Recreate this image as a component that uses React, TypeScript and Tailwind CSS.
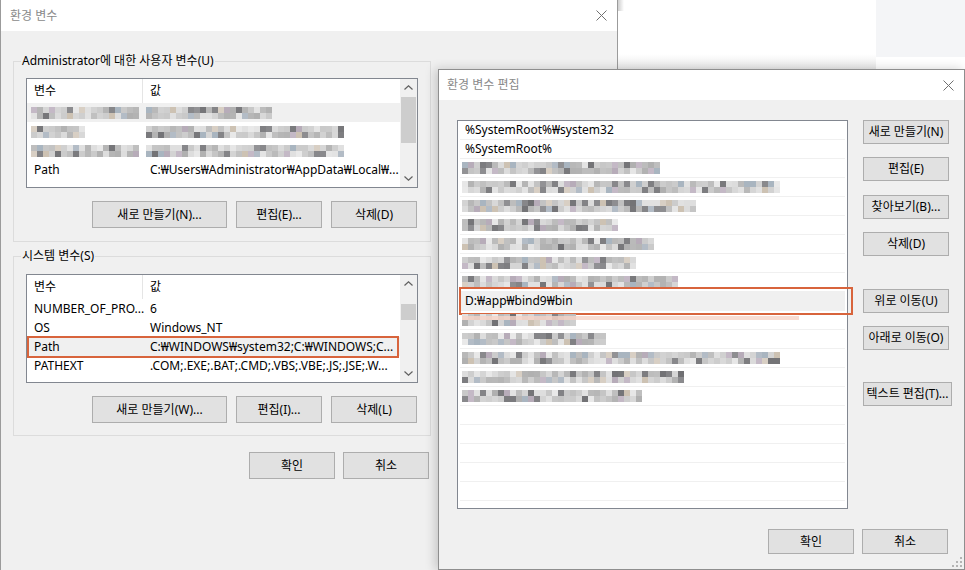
import React from 'react';

const FONT = "font-['Noto_Sans','Noto_Sans_CJK_KR',sans-serif]";

function makeRand(seed: number) {
  let s = seed * 7919 + 13;
  return () => {
    s = (s * 16807) % 2147483647;
    return s / 2147483647;
  };
}

const TINTS = ['#b7acb9', '#a9b5c0', '#cdc2b3', '#c4b9c6', '#b3bcc6', '#d8cfc4'];

// pixelated (blurred-out) text
function Mosaic({ seed, width }: { seed: number; width: number }) {
  const rand = makeRand(seed);
  const cols = Math.max(1, Math.round(width / 6));
  const cells: string[] = [];
  for (let i = 0; i < cols * 2; i++) {
    const v = rand();
    if (v < 0.16) {
      const l = 112 + Math.floor(rand() * 36);
      cells.push(`rgb(${l},${l},${l + 3})`);
    } else if (v < 0.32) {
      cells.push(TINTS[Math.floor(rand() * TINTS.length)]);
    } else {
      const l = 176 + Math.floor(rand() * 58);
      cells.push(`rgb(${l},${l},${l})`);
    }
  }
  return (
    <div className="flex flex-wrap" style={{ width: cols * 6 }}>
      {cells.map((c, i) => (
        <span key={i} className="h-[6px] w-[6px]" style={{ backgroundColor: c }} />
      ))}
    </div>
  );
}

function Chevron({ up }: { up?: boolean }) {
  return (
    <svg width="9" height="5" viewBox="0 0 9 5" fill="none" stroke="#606060" strokeWidth="1.2">
      <path d={up ? 'M0.5 4.5 L4.5 0.8 L8.5 4.5' : 'M0.5 0.5 L4.5 4.2 L8.5 0.5'} />
    </svg>
  );
}

function CloseX() {
  return (
    <svg width="11" height="11" viewBox="0 0 11 11" fill="none" stroke="#707070" strokeWidth="1">
      <path d="M0.5 0.5 L10.5 10.5 M10.5 0.5 L0.5 10.5" />
    </svg>
  );
}

function Btn({ children, className }: { children: React.ReactNode; className: string }) {
  return (
    <div
      className={`flex shrink-0 items-center justify-center whitespace-nowrap border border-[#adadad] bg-[#e1e1e1] text-[12px] text-black ${className}`}
    >
      {children}
    </div>
  );
}

type VarRow = {
  name?: string;
  value?: string;
  blur?: [number, number, number, number];
  shaded?: boolean;
  boxed?: boolean;
};

function VarList({
  rows,
  boxClass,
  thumbClass,
}: {
  rows: VarRow[];
  boxClass: string;
  thumbClass: string;
}) {
  return (
    <div className={`flex w-[392px] border border-[#828790] bg-white ${boxClass}`}>
      <div className="flex flex-1 flex-col">
        <div className="flex h-[24px] shrink-0 text-[12px]">
          <div className="flex w-[116px] items-center border-r border-[#e5e5e5] pl-[7px]">변수</div>
          <div className="flex items-center pl-[7px]">값</div>
        </div>
        {rows.map((r, i) => (
          <div
            key={i}
            className={`relative flex h-[19px] shrink-0 items-center whitespace-nowrap text-[12px] ${
              r.shaded ? 'bg-[#f0f0f0]' : ''
            }`}
          >
            <div className={`w-[116px] ${r.blur ? 'pl-[4px]' : 'pl-[7px]'}`}>
              {r.blur ? <Mosaic seed={r.blur[0]} width={r.blur[1]} /> : r.name}
            </div>
            <div className={r.blur ? 'pl-[3px]' : 'pl-[7px]'}>
              {r.blur ? <Mosaic seed={r.blur[2]} width={r.blur[3]} /> : r.value}
            </div>
            {r.boxed && (
              <span className="pointer-events-none absolute -bottom-[2px] -top-[1px] left-0 right-[1px] border-2 border-[#d8643c]" />
            )}
          </div>
        ))}
      </div>
      <div className="flex w-[17px] flex-col bg-[#f0f0f0]">
        <div className="flex h-[17px] items-center justify-center">
          <Chevron up />
        </div>
        <div className="flex-1 px-[1px]">
          <div className={`bg-[#cdcdcd] ${thumbClass}`} />
        </div>
        <div className="flex h-[17px] items-center justify-center">
          <Chevron />
        </div>
      </div>
    </div>
  );
}

function GroupBox({
  label,
  className,
  children,
}: {
  label: string;
  className: string;
  children: React.ReactNode;
}) {
  return (
    <div className={`relative w-[418px] border border-[#dcdcdc] pl-[12px] ${className}`}>
      <span className="absolute -top-[9px] left-[7px] bg-[#f0f0f0] px-[1px] text-[12px] leading-[16px] text-black">
        {label}
      </span>
      {children}
    </div>
  );
}

const userRows: VarRow[] = [
  { blur: [3, 110, 4, 126], shaded: true },
  { blur: [5, 55, 6, 195] },
  { blur: [7, 110, 8, 195] },
  { name: 'Path', value: 'C:₩Users₩Administrator₩AppData₩Local₩...' },
];

const systemRows: VarRow[] = [
  { name: 'NUMBER_OF_PRO...', value: '6' },
  { name: 'OS', value: 'Windows_NT' },
  { name: 'Path', value: 'C:₩WINDOWS₩system32;C:₩WINDOWS;C...', shaded: true, boxed: true },
  { name: 'PATHEXT', value: '.COM;.EXE;.BAT;.CMD;.VBS;.VBE;.JS;.JSE;.W...' },
];

type PathRow = { text?: string; blur?: [number, number]; selected?: boolean; pink?: boolean };

const pathRows: PathRow[] = [
  { text: '%SystemRoot%₩system32' },
  { text: '%SystemRoot%' },
  { blur: [21, 196] },
  { blur: [22, 320] },
  { blur: [23, 231] },
  { blur: [24, 156] },
  { blur: [25, 191] },
  { blur: [26, 171] },
  { blur: [27, 215] },
  { text: 'D:₩app₩bind9₩bin', selected: true },
  { blur: [28, 115], pink: true },
  { blur: [29, 146] },
  { blur: [30, 316] },
  { blur: [31, 221] },
  { blur: [32, 181] },
  {},
  {},
  {},
  {},
  {},
];

function EnvDialog() {
  return (
    <div className="absolute left-0 top-0 flex h-[570px] w-[618px] flex-col border-l border-r border-[#9b9b9b]">
      <div className="flex h-[31px] shrink-0 items-center justify-between bg-white pl-[9px] pr-[10px]">
        <span className="text-[12px] text-[#8a8a8a]">환경 변수</span>
        <CloseX />
      </div>
      <div className="flex flex-1 flex-col bg-[#f0f0f0] pl-[12px] pt-[30px]">
        <GroupBox label="Administrator에 대한 사용자 변수(U)" className="h-[181px] pt-[16px]">
          <VarList rows={userRows} boxClass="h-[110px]" thumbClass="mt-[1px] h-[46px]" />
          <div className="mt-[13px] flex justify-end gap-[9px] pr-[13px]">
            <Btn className="h-[27px] w-[135px]">새로 만들기(N)...</Btn>
            <Btn className="h-[27px] w-[86px]">편집(E)...</Btn>
            <Btn className="h-[27px] w-[86px]">삭제(D)</Btn>
          </div>
        </GroupBox>
        <GroupBox label="시스템 변수(S)" className="mt-[14px] h-[180px] pt-[17px]">
          <VarList rows={systemRows} boxClass="h-[109px]" thumbClass="mt-[12px] h-[16px]" />
          <div className="mt-[13px] flex justify-end gap-[9px] pr-[13px]">
            <Btn className="h-[27px] w-[135px]">새로 만들기(W)...</Btn>
            <Btn className="h-[27px] w-[86px]">편집(I)...</Btn>
            <Btn className="h-[27px] w-[86px]">삭제(L)</Btn>
          </div>
        </GroupBox>
        <div className="mt-[16px] flex w-[418px] justify-end gap-[8px] pr-[2px]">
          <Btn className="h-[27px] w-[86px]">확인</Btn>
          <Btn className="h-[27px] w-[86px]">취소</Btn>
        </div>
      </div>
    </div>
  );
}

function EditDialog() {
  return (
    <div className="absolute left-[438px] top-[69px] flex h-[501px] w-[527px] flex-col border border-[#8e8e8e] shadow-[-3px_0_10px_rgba(0,0,0,0.18)]">
      <div className="flex h-[30px] shrink-0 items-center justify-between bg-white pl-[8px] pr-[10px]">
        <span className="text-[12px] text-[#8a8a8a]">환경 변수 편집</span>
        <CloseX />
      </div>
      <div className="relative flex flex-1 flex-col bg-[#f0f0f0] pl-[18px] pt-[20px]">
        <div className="flex">
          <div className="flex h-[389px] w-[391px] flex-col border border-[#828790] bg-white">
            {pathRows.map((r, i) => (
              <div
                key={i}
                className={`relative mx-[2px] flex h-[19px] shrink-0 items-center whitespace-nowrap border-b border-[#f0f0f0] text-[12px] text-black ${
                  r.selected ? 'bg-[#f0f0f0]' : ''
                } ${r.blur ? 'pl-[2px]' : 'pl-[5px]'}`}
              >
                {r.blur ? <Mosaic seed={r.blur[0]} width={r.blur[1]} /> : r.text}
                {r.pink && (
                  <span className="absolute left-[2px] top-[5px] h-[4px] w-[337px] bg-[#f6d3c7] opacity-80" />
                )}
                {r.selected && (
                  <span className="pointer-events-none absolute -bottom-[5px] -left-[1px] -right-[8px] -top-[5px] border-2 border-[#d8643c]" />
                )}
              </div>
            ))}
          </div>
          <div className="ml-[15px] flex flex-col">
            <Btn className="h-[24px] w-[86px]">새로 만들기(N)</Btn>
            <Btn className="mt-[13px] h-[24px] w-[86px]">편집(E)</Btn>
            <Btn className="mt-[14px] h-[24px] w-[86px]">찾아보기(B)...</Btn>
            <Btn className="mt-[13px] h-[24px] w-[86px]">삭제(D)</Btn>
            <Btn className="mt-[33px] h-[24px] w-[86px]">위로 이동(U)</Btn>
            <Btn className="mt-[13px] h-[24px] w-[86px]">아래로 이동(O)</Btn>
            <Btn className="mt-[32px] h-[24px] w-[89px]">텍스트 편집(T)...</Btn>
          </div>
        </div>
        <div className="mt-[20px] flex justify-end gap-[8px] pr-[16px]">
          <Btn className="h-[25px] w-[86px]">확인</Btn>
          <Btn className="h-[25px] w-[86px]">취소</Btn>
        </div>
        <svg className="absolute bottom-[1px] right-[1px]" width="12" height="12" viewBox="0 0 12 12" fill="#b4b4b4">
          <rect x="9" y="1" width="2" height="2" />
          <rect x="5" y="5" width="2" height="2" />
          <rect x="9" y="5" width="2" height="2" />
          <rect x="1" y="9" width="2" height="2" />
          <rect x="5" y="9" width="2" height="2" />
          <rect x="9" y="9" width="2" height="2" />
        </svg>
      </div>
    </div>
  );
}

export default function App() {
  return (
    <div className={`relative h-[570px] w-[965px] overflow-hidden bg-white ${FONT}`}>
      <div className="absolute right-0 top-0 h-[57px] w-[89px] bg-[#f4f5f7]" />
      <div className="absolute left-[618px] top-[54px] h-[15px] w-[258px] bg-gradient-to-b from-white to-[#e9e9e9]" />
      <div className="absolute left-[618px] top-0 h-[11px] w-[6px] bg-gradient-to-r from-[#cfcfcf] to-white" />
      <EnvDialog />
      <EditDialog />
    </div>
  );
}
